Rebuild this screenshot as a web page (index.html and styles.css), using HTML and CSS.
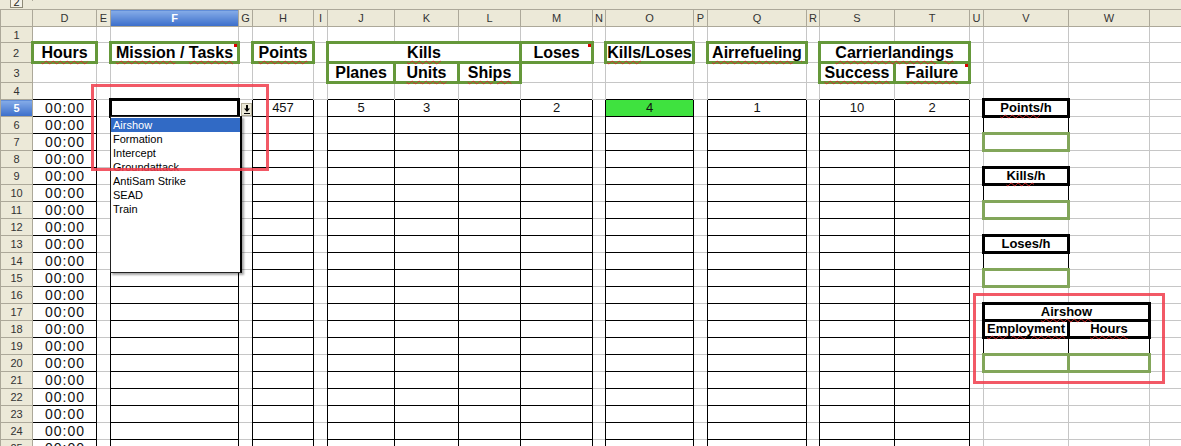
FILE: index.html
```html
<!DOCTYPE html>
<html lang="en">
<head>
	<meta charset="UTF-8">
	<title>Flight log</title>
	<link rel="stylesheet" href="styles.css">
</head>
<body>
<div class="sheet">
	<div class="outline">
		<div class="outline-head"><span class="lvl">2</span></div>
	</div>
	<table class="grid">
		<colgroup>
			<col class="chd"><col class="cd"><col class="cs"><col class="cf"><col class="cs"><col class="ch"><col class="cs"><col class="cj"><col class="ck"><col class="cl"><col class="cm"><col class="cn"><col class="co"><col class="cs"><col class="cq"><col class="cn"><col class="ct"><col class="ct"><col class="cs"><col class="cv"><col class="cw"><col class="chd">
		</colgroup>
		<thead>
			<tr class="hr"><th></th><th>D</th><th>E</th><th class="sel">F</th><th>G</th><th>H</th><th>I</th><th>J</th><th>K</th><th>L</th><th>M</th><th>N</th><th>O</th><th>P</th><th>Q</th><th>R</th><th>S</th><th>T</th><th>U</th><th>V</th><th>W</th><th></th></tr>
		</thead>
		<tbody>
			<tr class="r1"><th>1</th><td></td><td></td><td></td><td></td><td></td><td></td><td></td><td></td><td></td><td></td><td></td><td></td><td></td><td></td><td></td><td></td><td></td><td></td><td></td><td></td><td></td></tr>
			<tr class="r2"><th>2</th><td class="g"><span class="sp">Hours</span></td><td></td><td class="g note"><span class="sp">Mission</span> / <span class="sp">Tasks</span></td><td></td><td class="g"><span class="sp">Points</span></td><td></td><td class="g" colspan="3"><span class="sp">Kills</span></td><td class="g note">Loses</td><td></td><td class="g"><span class="sp">Kills</span>/Loses</td><td></td><td class="g"><span class="sp">Airrefueling</span></td><td></td><td class="g" colspan="2"><span class="sp">Carrierlandings</span></td><td></td><td></td><td></td><td></td></tr>
			<tr class="r2"><th>3</th><td></td><td></td><td></td><td></td><td></td><td></td><td class="g">Planes</td><td class="g"><span class="sp">Units</span></td><td class="g"><span class="sp">Ships</span></td><td></td><td></td><td></td><td></td><td></td><td></td><td class="g"><span class="sp">Success</span></td><td class="g note"><span class="sp">Failure</span></td><td></td><td></td><td></td><td></td></tr>
			<tr><th>4</th><td></td><td></td><td></td><td></td><td></td><td></td><td></td><td></td><td></td><td></td><td></td><td></td><td></td><td></td><td></td><td></td><td></td><td></td><td></td><td></td><td></td></tr>
			<tr><th class="sel">5</th><td class="b t">00:00</td><td></td><td class="cur"></td><td></td><td class="b">457</td><td></td><td class="b">5</td><td class="b">3</td><td class="b"></td><td class="b">2</td><td></td><td class="b hl">4</td><td></td><td class="b">1</td><td></td><td class="b">10</td><td class="b">2</td><td></td><td class="k"><span class="sp">Points</span>/h</td><td></td><td></td></tr>
			<tr><th>6</th><td class="b t">00:00</td><td></td><td class="b"></td><td></td><td class="b"></td><td></td><td class="b"></td><td class="b"></td><td class="b"></td><td class="b"></td><td></td><td class="b"></td><td></td><td class="b"></td><td></td><td class="b"></td><td class="b"></td><td></td><td class="vs"></td><td></td><td></td></tr>
			<tr><th>7</th><td class="b t">00:00</td><td></td><td class="b"></td><td></td><td class="b"></td><td></td><td class="b"></td><td class="b"></td><td class="b"></td><td class="b"></td><td></td><td class="b"></td><td></td><td class="b"></td><td></td><td class="b"></td><td class="b"></td><td></td><td class="gr"></td><td></td><td></td></tr>
			<tr><th>8</th><td class="b t">00:00</td><td></td><td class="b"></td><td></td><td class="b"></td><td></td><td class="b"></td><td class="b"></td><td class="b"></td><td class="b"></td><td></td><td class="b"></td><td></td><td class="b"></td><td></td><td class="b"></td><td class="b"></td><td></td><td></td><td></td><td></td></tr>
			<tr><th>9</th><td class="b t">00:00</td><td></td><td class="b"></td><td></td><td class="b"></td><td></td><td class="b"></td><td class="b"></td><td class="b"></td><td class="b"></td><td></td><td class="b"></td><td></td><td class="b"></td><td></td><td class="b"></td><td class="b"></td><td></td><td class="k"><span class="sp">Kills</span>/h</td><td></td><td></td></tr>
			<tr><th>10</th><td class="b t">00:00</td><td></td><td class="b"></td><td></td><td class="b"></td><td></td><td class="b"></td><td class="b"></td><td class="b"></td><td class="b"></td><td></td><td class="b"></td><td></td><td class="b"></td><td></td><td class="b"></td><td class="b"></td><td></td><td class="vs"></td><td></td><td></td></tr>
			<tr><th>11</th><td class="b t">00:00</td><td></td><td class="b"></td><td></td><td class="b"></td><td></td><td class="b"></td><td class="b"></td><td class="b"></td><td class="b"></td><td></td><td class="b"></td><td></td><td class="b"></td><td></td><td class="b"></td><td class="b"></td><td></td><td class="gr"></td><td></td><td></td></tr>
			<tr><th>12</th><td class="b t">00:00</td><td></td><td class="b"></td><td></td><td class="b"></td><td></td><td class="b"></td><td class="b"></td><td class="b"></td><td class="b"></td><td></td><td class="b"></td><td></td><td class="b"></td><td></td><td class="b"></td><td class="b"></td><td></td><td></td><td></td><td></td></tr>
			<tr><th>13</th><td class="b t">00:00</td><td></td><td class="b"></td><td></td><td class="b"></td><td></td><td class="b"></td><td class="b"></td><td class="b"></td><td class="b"></td><td></td><td class="b"></td><td></td><td class="b"></td><td></td><td class="b"></td><td class="b"></td><td></td><td class="k">Loses/h</td><td></td><td></td></tr>
			<tr><th>14</th><td class="b t">00:00</td><td></td><td class="b"></td><td></td><td class="b"></td><td></td><td class="b"></td><td class="b"></td><td class="b"></td><td class="b"></td><td></td><td class="b"></td><td></td><td class="b"></td><td></td><td class="b"></td><td class="b"></td><td></td><td class="vs"></td><td></td><td></td></tr>
			<tr><th>15</th><td class="b t">00:00</td><td></td><td class="b"></td><td></td><td class="b"></td><td></td><td class="b"></td><td class="b"></td><td class="b"></td><td class="b"></td><td></td><td class="b"></td><td></td><td class="b"></td><td></td><td class="b"></td><td class="b"></td><td></td><td class="gr"></td><td></td><td></td></tr>
			<tr><th>16</th><td class="b t">00:00</td><td></td><td class="b"></td><td></td><td class="b"></td><td></td><td class="b"></td><td class="b"></td><td class="b"></td><td class="b"></td><td></td><td class="b"></td><td></td><td class="b"></td><td></td><td class="b"></td><td class="b"></td><td></td><td></td><td></td><td></td></tr>
			<tr><th>17</th><td class="b t">00:00</td><td></td><td class="b"></td><td></td><td class="b"></td><td></td><td class="b"></td><td class="b"></td><td class="b"></td><td class="b"></td><td></td><td class="b"></td><td></td><td class="b"></td><td></td><td class="b"></td><td class="b"></td><td></td><td class="k" colspan="2"><span class="sp">Airshow</span></td><td></td></tr>
			<tr><th>18</th><td class="b t">00:00</td><td></td><td class="b"></td><td></td><td class="b"></td><td></td><td class="b"></td><td class="b"></td><td class="b"></td><td class="b"></td><td></td><td class="b"></td><td></td><td class="b"></td><td></td><td class="b"></td><td class="b"></td><td></td><td class="k"><span class="sp">Employment</span></td><td class="k"><span class="sp">Hours</span></td><td></td></tr>
			<tr><th>19</th><td class="b t">00:00</td><td></td><td class="b"></td><td></td><td class="b"></td><td></td><td class="b"></td><td class="b"></td><td class="b"></td><td class="b"></td><td></td><td class="b"></td><td></td><td class="b"></td><td></td><td class="b"></td><td class="b"></td><td></td><td class="vs"></td><td class="vs"></td><td></td></tr>
			<tr><th>20</th><td class="b t">00:00</td><td></td><td class="b"></td><td></td><td class="b"></td><td></td><td class="b"></td><td class="b"></td><td class="b"></td><td class="b"></td><td></td><td class="b"></td><td></td><td class="b"></td><td></td><td class="b"></td><td class="b"></td><td></td><td class="gr"></td><td class="gr"></td><td></td></tr>
			<tr><th>21</th><td class="b t">00:00</td><td></td><td class="b"></td><td></td><td class="b"></td><td></td><td class="b"></td><td class="b"></td><td class="b"></td><td class="b"></td><td></td><td class="b"></td><td></td><td class="b"></td><td></td><td class="b"></td><td class="b"></td><td></td><td></td><td></td><td></td></tr>
			<tr><th>22</th><td class="b t">00:00</td><td></td><td class="b"></td><td></td><td class="b"></td><td></td><td class="b"></td><td class="b"></td><td class="b"></td><td class="b"></td><td></td><td class="b"></td><td></td><td class="b"></td><td></td><td class="b"></td><td class="b"></td><td></td><td></td><td></td><td></td></tr>
			<tr><th>23</th><td class="b t">00:00</td><td></td><td class="b"></td><td></td><td class="b"></td><td></td><td class="b"></td><td class="b"></td><td class="b"></td><td class="b"></td><td></td><td class="b"></td><td></td><td class="b"></td><td></td><td class="b"></td><td class="b"></td><td></td><td></td><td></td><td></td></tr>
			<tr><th>24</th><td class="b t">00:00</td><td></td><td class="b"></td><td></td><td class="b"></td><td></td><td class="b"></td><td class="b"></td><td class="b"></td><td class="b"></td><td></td><td class="b"></td><td></td><td class="b"></td><td></td><td class="b"></td><td class="b"></td><td></td><td></td><td></td><td></td></tr>
			<tr><th>25</th><td class="b t">00:00</td><td></td><td class="b"></td><td></td><td class="b"></td><td></td><td class="b"></td><td class="b"></td><td class="b"></td><td class="b"></td><td></td><td class="b"></td><td></td><td class="b"></td><td></td><td class="b"></td><td class="b"></td><td></td><td></td><td></td><td></td></tr>
		</tbody>
	</table>

	<!-- cell validation list, open over column F -->
	<a href="javascript:;" class="drop-btn">
		<svg width="8" height="9" viewBox="0 0 8 9"><path d="M4 7 L1 3.5 H3 V0 H5 V3.5 H7 Z" fill="#000"/><rect x="1" y="8" width="6" height="1" fill="#000"/></svg>
	</a>
	<ul class="drop-list">
		<li class="on">Airshow</li>
		<li>Formation</li>
		<li>Intercept</li>
		<li>Groundattack</li>
		<li>AntiSam Strike</li>
		<li>SEAD</li>
		<li>Train</li>
	</ul>

	<div class="mark mark-list"></div>
	<div class="mark mark-table"></div>
</div>
</body>
</html>
```

FILE: styles.css
```css
*{
	margin:0;
	padding:0;
	box-sizing:border-box;
}
body{
	font-family:"Liberation Sans",Arial,sans-serif;
	background:#fff;
	width:1181px;
	height:446px;
	overflow:hidden;
}
.sheet{
	position:relative;
}
.outline{
	height:9px;
	background:#ece9d8;
	overflow:hidden;
}
.outline-head{
	width:33px;
	height:9px;
	border-right:1px solid #aca899;
	padding-left:10px;
}
.lvl{
	display:block;
	width:13px;
	height:16px;
	margin-top:-8px;
	border:1px solid #8e8a78;
	background:#f4f2e8;
	font-size:11px;
	line-height:19px;
	text-align:center;
	color:#222;
}

/* grid */
.grid{
	border-collapse:collapse;
	table-layout:fixed;
	width:1181px;
	font-size:13px;
}
.grid tr{
	height:17px;
}
.grid tr.hr{
	height:17px;
}
.grid tr.r1{
	height:16px;
}
.grid tr.r2{
	height:20px;
}
.grid td{
	border-top:1px solid #c6c6c6;
	border-left:1px solid #c6c6c6;
	border-right:none;
	border-bottom:none;
	padding:0;
	text-align:center;
	white-space:nowrap;
	line-height:14px;
	color:#111;
}
.grid th{
	border:1px solid #aca899;
	background:#ece9d8;
	font-weight:normal;
	font-size:11px;
	color:#333;
	line-height:14px;
}
.grid th.sel{
	background:linear-gradient(#86ade8,#3a6dca);
	color:#fff;
	font-weight:bold;
}
.chd{width:32px}
.cd{width:64px}
.cs{width:14px}
.cf{width:128px}
.ch{width:61px}
.cj{width:67px}
.ck{width:64px}
.cl{width:62px}
.cm{width:72px}
.cn{width:13px}
.co{width:88px}
.cq{width:99px}
.ct{width:75px}
.cv{width:85px}
.cw{width:81px}

.grid td.b{
	border:1px solid #000;
}
.grid td.t{
	font-size:14px;
	letter-spacing:1px;
	padding-left:1px;
}
.grid td.hl{
	background:#3fe23f;
}
.grid td.cur{
	border:3px solid #000;
}
.grid td.g{
	border:3px solid #65983a;
	font-size:16px;
	font-weight:bold;
	line-height:15px;
	color:#000;
}
.grid td.note{
	position:relative;
}
.grid td.note:after{
	content:"";
	position:absolute;
	right:0;
	top:0;
	width:3px;
	height:3px;
	background:#d00;
}
.grid td.k{
	border:3px solid #000;
	font-weight:bold;
	font-size:13px;
	line-height:12px;
	color:#000;
}
.grid td.vs{
	border-left:1px solid #000;
	border-right:1px solid #000;
}
.grid td.gr{
	border:3px solid #82a65a;
}
.sp{
	text-decoration:underline wavy #d42a2a;
	text-decoration-thickness:1px;
	text-underline-offset:2px;
}

/* dropdown */
.drop-btn{
	position:absolute;
	left:241px;
	top:103px;
	width:11px;
	height:13px;
	background:#ece9d8;
	border:1px solid #b5b09c;
	display:flex;
	align-items:center;
	justify-content:center;
}
.drop-list{
	position:absolute;
	left:110px;
	top:116px;
	width:132px;
	height:157px;
	list-style:none;
	background:#fff;
	border:1px solid #222;
	border-right:2px solid #000;
	box-shadow:2px 2px 2px rgba(0,0,0,.35);
	padding-top:1px;
	font-size:11px;
	color:#000;
}
.drop-list li{
	height:14px;
	line-height:14px;
	padding-left:2px;
}
.drop-list .on{
	background:#316ac5;
	color:#fff;
}

/* red annotation frames */
.mark{
	position:absolute;
	border:3px solid rgba(240,60,75,.85);
}
.mark-list{
	left:91px;
	top:84px;
	width:178px;
	height:87px;
}
.mark-table{
	left:973px;
	top:293px;
	width:192px;
	height:91px;
}
```
